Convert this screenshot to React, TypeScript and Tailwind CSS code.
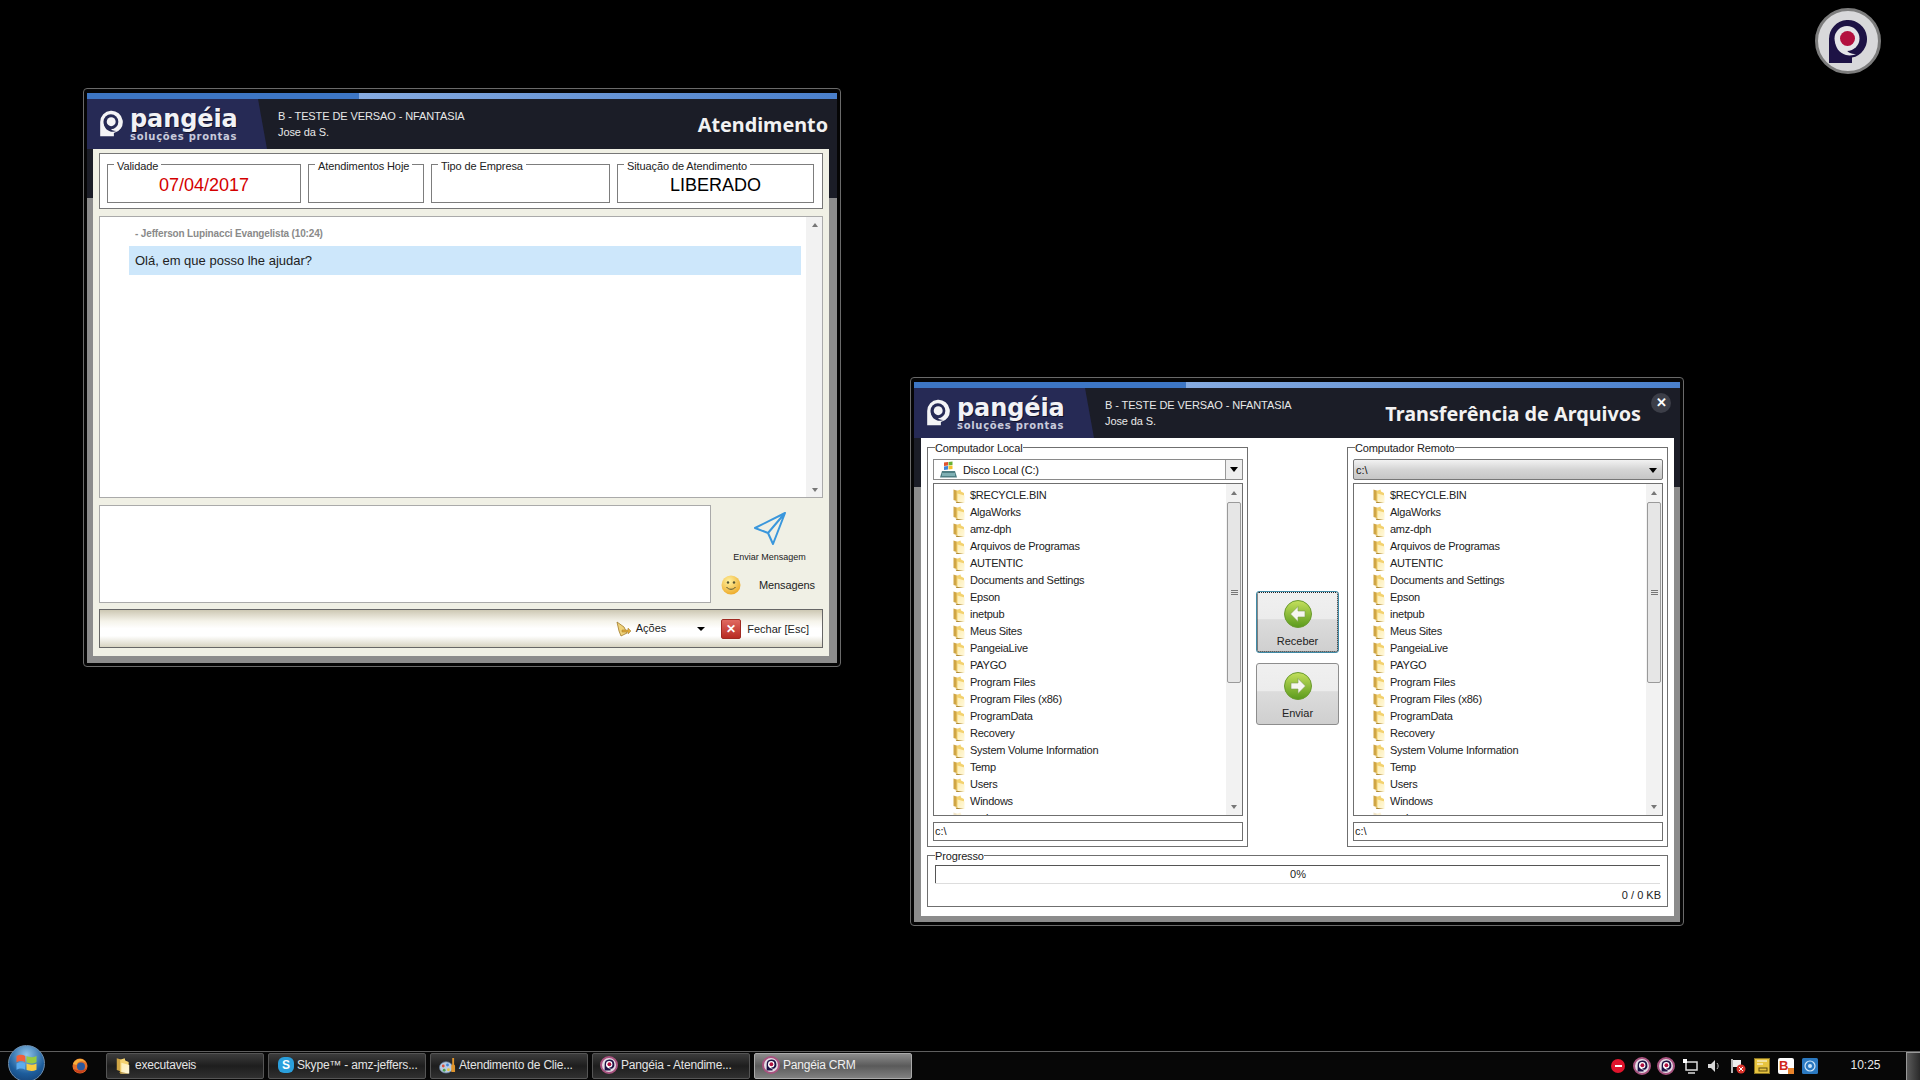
import type { ReactNode } from "react";

const folders = [
  "$RECYCLE.BIN", "AlgaWorks", "amz-dph", "Arquivos de Programas", "AUTENTIC", "Documents and Settings",
  "Epson", "inetpub", "Meus Sites", "PangeiaLive", "PAYGO", "Program Files", "Program Files (x86)",
  "ProgramData", "Recovery", "System Volume Information", "Temp", "Users", "Windows",
];

const taskButtons = [
  { label: "executaveis", icon: "folder", pad: "pl-[9px] gap-[5px]" },
  { label: "Skype™ - amz-jeffers...", icon: "skype", pad: "pl-[9px] gap-[3px]" },
  { label: "Atendimento de Clie...", icon: "app", pad: "pl-[8px] gap-[3px]" },
  { label: "Pangéia - Atendime...", icon: "pangeia", pad: "pl-[7px] gap-[3px]" },
  { label: "Pangéia CRM", icon: "pangeia", pad: "pl-[7px] gap-[3px]", active: true },
];

function PMark({ mark, ring, dot, className }: { mark: string; ring: string; dot: string; className: string }) {
  return (
    <svg viewBox="15 13 42 47" className={className}>
      <path d="M17 34a19 19 0 1 1 23 18.6V58H17Z" fill={mark} />
      <circle cx="35" cy="33.5" r="12.5" fill={ring} />
      <path d="M23 35c0 7 4 13 11 15 4 1 8 0 10-1-5 0-9-2-10-5Z" fill={ring} />
      <circle cx="35.5" cy="33.5" r="7.5" fill={dot} />
    </svg>
  );
}

function PangeiaLogo() {
  return (
    <div className="w-[180px] h-full shrink-0 bg-[#262a55] [clip-path:polygon(0_0,95%_0,100%_100%,0_100%)] flex pl-[12px] pt-[9px]">
      <PMark mark="#f4f4f6" ring="#262a55" dot="#f4f4f6" className="w-[25px] h-[29px] mr-[6px] mt-[1px]" />
      <div className="flex flex-col text-[#f2f2f6]">
        <span className="font-['DejaVu_Sans',sans-serif] font-bold text-[24px] leading-[22px] tracking-[-0.1px] [text-shadow:1px_1px_0_#10122a]">pangéia</span>
        <span className="font-['DejaVu_Sans',sans-serif] font-bold text-[10px] leading-[11px] mt-[1px] tracking-[0.7px] text-[#c9cbdc] whitespace-nowrap">soluções prontas</span>
      </div>
    </div>
  );
}

function Header({ title, close }: { title: string; close?: boolean }) {
  return (
    <div className="h-[50px] flex shrink-0">
      <PangeiaLogo />
      <div className="pl-[11px] pt-[9px] text-[#e8e8e8] text-[11px] leading-[16px] tracking-[-0.1px]">
        <div>B - TESTE DE VERSAO - NFANTASIA</div>
        <div>Jose da S.</div>
      </div>
      <div className={`ml-auto font-['Noto_Sans',sans-serif] font-bold text-[19.8px] text-[#f2f2f2] pt-[11px] ${close ? "mr-[39px]" : "mr-[9px]"}`}>
        {title}
      </div>
      {close && (
        <div className="absolute right-[9px] top-[11px] w-[20px] h-[20px] rounded-full bg-[#3c3e48] flex items-center justify-center text-white text-[13px] font-bold">
          ✕
        </div>
      )}
    </div>
  );
}

function Win({ x, y, w, h, title, close, children }: { x: string; y: string; w: string; h: string; title: string; close?: boolean; children: ReactNode }) {
  return (
    <div className={`absolute ${x} ${y} ${w} ${h} rounded-[4px] border border-[#6a6a6a] bg-[#050505] p-[3px] pt-[4px] flex`}>
      <div className="relative flex-1 flex flex-col min-w-0 bg-[linear-gradient(#1b1d27_0,#1b1d27_105px,#8c8c8c_105px)]">
        <div className="h-[6px] shrink-0 flex">
          <div className="w-[272px] bg-[#3d76c4]" />
          <div className="flex-1 bg-[linear-gradient(90deg,#86abe0,#4a80cc)]" />
        </div>
        <Header title={title} close={close} />
        {children}
      </div>
    </div>
  );
}

function FieldBox({ label, w, value, color }: { label: string; w: string; value?: string; color?: string }) {
  return (
    <fieldset className={`${w} h-[45px] border border-[#7d7d7d] shrink-0`}>
      <legend className="ml-[6px] px-[3px] text-[11px] leading-[12px] text-[#222] translate-y-[2px] tracking-[-0.1px]">{label}</legend>
      <div className={`text-center text-[18px] leading-[24px] pt-[3px] ${color}`}>{value}</div>
    </fieldset>
  );
}

function ArrowUp() {
  return <div className="w-0 h-0 border-x-[3.5px] border-x-transparent border-b-[4px] border-b-[#777]" />;
}
function ArrowDown() {
  return <div className="w-0 h-0 border-x-[3.5px] border-x-transparent border-t-[4px] border-t-[#777]" />;
}

function Folder({ faded, big }: { faded?: boolean; big?: boolean }) {
  return (
    <svg viewBox="0 0 12 15" className={`${big ? "w-[14px] h-[17px]" : "w-[12px] h-[16px]"} shrink-0 ${faded ? "opacity-30" : ""}`}>
      <defs>
        <linearGradient id="folderFront" x1="0" y1="0" x2="1" y2="1">
          <stop offset="0" stopColor="#fdeeb4" />
          <stop offset="1" stopColor="#fff8dc" />
        </linearGradient>
      </defs>
      <path d="M0.5 1 5 2.500V13L0.500 11.500Z" fill="#cfa545" />
      <path d="M3.500 2.500 7.500 1 8 3l3 1.500V14.500H3.500Z" fill="#f3d270" />
      <path d="M4.500 5 11.500 7v7.500H4.500Z" fill="url(#folderFront)" />
      <path d="M2.500 13 11 14.500H3.500Z" fill="#b08a34" />
    </svg>
  );
}

function Tree() {
  return (
    <div className="h-[333px] border border-[#6f6f6f] bg-white flex overflow-hidden shrink-0">
      <div className="flex-1 pl-[19px] pt-[3px] overflow-hidden">
        {folders.map((f) => (
          <div key={f} className="h-[17px] flex items-center gap-[5px] text-[11px] tracking-[-0.25px] text-[#222] whitespace-nowrap">
            <Folder />
            {f}
          </div>
        ))}
        <div className="h-[17px] flex items-center gap-[5px] text-[11px] text-[#222]">
          <Folder faded />
          wwl
        </div>
      </div>
      <div className="w-[16px] shrink-0 bg-[#f2f2f2] flex flex-col items-center pt-[7px] pb-[3px]">
        <ArrowUp />
        <div className="w-[14px] h-[181px] mt-[7px] rounded-[2px] border border-[#9a9a9a] bg-[#e6e6e6] flex flex-col items-center justify-center gap-[1px]">
          <div className="w-[7px] h-px bg-[#777]" />
          <div className="w-[7px] h-px bg-[#777]" />
          <div className="w-[7px] h-px bg-[#777]" />
        </div>
        <div className="mt-auto mb-[3px]">
          <ArrowDown />
        </div>
      </div>
    </div>
  );
}

function FilePane({ label, remote }: { label: string; remote?: boolean }) {
  return (
    <fieldset className="w-[321px] h-[407px] border border-[#6f6f6f] shrink-0 pl-[5px] pr-[4px]">
      <legend className="ml-[2px] text-[11px] leading-[14px] text-[#222] translate-y-[1px] tracking-[-0.15px]">{label}</legend>
      {remote ? (
        <div className="h-[21px] mt-[5px] mb-[3px] rounded-[2px] border border-[#777] bg-[linear-gradient(#f2f2f2,#d5d5d5_50%,#c6c6c6)] flex items-center pl-[2px] pt-px text-[11px] text-[#111]">
          c:\
          <div className="ml-auto mr-[5px] w-0 h-0 border-x-[4px] border-x-transparent border-t-[5px] border-t-black" />
        </div>
      ) : (
        <div className="h-[21px] mt-[5px] mb-[3px] border border-[#8a8a8a] bg-white flex items-center pl-[6px] text-[11px] tracking-[-0.15px] text-[#111]">
          <svg viewBox="0 0 17 17" className="w-[17px] h-[17px] mr-[6px]">
            <path d="M2 10h13l2 6.500H0Z" fill="#4f7f84" />
            <rect x="2" y="12" width="13" height="3" fill="#7fb0b4" />
            <path d="M4 1.500 8 1v3.500L4 5Z" fill="#e0522c" />
            <path d="M8.500 1l4-.5V4l-4 .5Z" fill="#68b034" />
            <path d="M4 5.500l4-.5v3.500L4 9Z" fill="#3f83d6" />
            <path d="M8.500 5l4-.5V8l-4 .5Z" fill="#f4c02c" />
          </svg>
          <span className="pt-px">Disco Local (C:)</span>
          <div className="ml-auto h-full w-[17px] border-l border-[#999] bg-[#eeeeee] flex items-center justify-center">
            <div className="w-0 h-0 border-x-[4px] border-x-transparent border-t-[5px] border-t-black" />
          </div>
        </div>
      )}
      <Tree />
      <div className="h-[19px] mt-[6px] border border-[#6f6f6f] bg-white pl-[1px] text-[11px] leading-[17px] text-[#222]">c:\</div>
    </fieldset>
  );
}

function GreenButton({ label, dir, focus }: { label: string; dir: "left" | "right"; focus?: boolean }) {
  return (
    <div className={`relative w-[83px] h-[62px] rounded-[3px] border flex flex-col items-center pt-[8px] text-[11px] text-[#222] bg-[linear-gradient(#f0f0f0,#ececec_45%,#dcdcdc_46%,#cfcfcf)] ${focus ? "border-[#3f8aa6] outline-dotted outline-1 -outline-offset-2 outline-[#222]" : "border-[#8d8d8d]"}`}>
      <svg viewBox="0 0 28 28" className="w-[28px] h-[28px]">
        <defs>
          <linearGradient id={`g${dir}`} x1="0" y1="0" x2="0" y2="1">
            <stop offset="0" stopColor="#c4e05c" />
            <stop offset="1" stopColor="#5a9a1c" />
          </linearGradient>
        </defs>
        <circle cx="14" cy="14" r="13.500" fill={`url(#g${dir})`} stroke="#6a9a30" />
        <path
          d={dir === "left" ? "M6.500 14 14 6.500V11h7v6h-7v4.500Z" : "M21.500 14 14 6.500V11H7v6h7v4.500Z"}
          fill="#f6f6f0"
          stroke="#7d9a50"
          strokeWidth="0.6"
        />
      </svg>
      <span className="mt-[5px]">{label}</span>
    </div>
  );
}

function TaskIcon({ icon }: { icon: string }) {
  if (icon === "folder") {
    return <Folder big />;
  }
  if (icon === "skype") {
    return (
      <div className="w-[16px] h-[16px] shrink-0 rounded-[6px] bg-[#2a9fdc] flex items-center justify-center text-white font-bold text-[12px] leading-none">S</div>
    );
  }
  if (icon === "app") {
    return (
      <svg viewBox="0 0 18 18" className="w-[17px] h-[17px] shrink-0">
        <ellipse cx="7.500" cy="11" rx="7" ry="6" fill="#b8cbe0" stroke="#5d7898" strokeWidth="0.8" />
        <circle cx="4.500" cy="9.500" r="1.500" fill="#d94f3a" />
        <circle cx="9" cy="8.500" r="1.500" fill="#3f83d6" />
        <circle cx="5.500" cy="14" r="1.500" fill="#4aa050" />
        <circle cx="10" cy="13.500" r="1.500" fill="#e8c23c" />
        <path d="M14 1h2v7l1 1v7h-4V9l1-1Z" fill="#e0952c" />
      </svg>
    );
  }
  return <PIcon />;
}

function PIcon() {
  return (
    <div className="w-[18px] h-[18px] shrink-0 rounded-full bg-[#e4dce4] border-[2px] border-[#a8527f] flex items-center justify-center">
      <PMark mark="#1d1245" ring="#ffffff" dot="#b01040" className="w-[11px] h-[12px]" />
    </div>
  );
}

function Tray({ children }: { children: ReactNode }) {
  return <div className="w-[24px] h-full flex items-center justify-center shrink-0">{children}</div>;
}

export default function App() {
  return (
    <div className="relative w-[1920px] h-[1080px] overflow-hidden bg-black flex flex-col justify-end font-['Liberation_Sans',sans-serif]">
      {/* desktop badge */}
      <div className="absolute left-[1815px] top-[8px] w-[66px] h-[66px] rounded-full bg-[#d8d8da] border-[3px] border-[#7c7c7c] flex items-center justify-center">
        <PMark mark="#1d1245" ring="#e4e4e8" dot="#b3103f" className="w-[42px] h-[47px]" />
      </div>

      <Win x="left-[83px]" y="top-[88px]" w="w-[758px]" h="h-[579px]" title="Atendimento">
        <div className="flex-1 ml-[6px] mr-[8px] mb-[7px] bg-[#f0f0e5] px-[6px] pt-[4px] flex flex-col">
          <div className="h-[56px] border border-[#777] bg-white flex gap-[7px] pl-[7px] pt-[4px] shrink-0">
            <FieldBox label="Validade" w="w-[194px]" value="07/04/2017" color="text-[#d40000]" />
            <FieldBox label="Atendimentos Hoje" w="w-[116px]" />
            <FieldBox label="Tipo de Empresa" w="w-[179px]" />
            <FieldBox label="Situação de Atendimento" w="w-[197px]" value="LIBERADO" color="text-black" />
          </div>
          <div className="h-[282px] mt-[7px] border border-[#aaaaaa] bg-white flex shrink-0">
            <div className="flex-1 pl-[29px] pr-[5px] pt-[10px]">
              <div className="pl-[6px] text-[10px] font-bold leading-[13px] tracking-[-0.15px] text-[#8a8a8a]">- Jefferson Lupinacci Evangelista (10:24)</div>
              <div className="mt-[6px] h-[29px] bg-[#cde7fb] pl-[6px] text-[13px] leading-[29px] text-[#222]">Olá, em que posso lhe ajudar?</div>
            </div>
            <div className="w-[16px] bg-[#f2f2f2] flex flex-col items-center justify-between pl-[2px] pt-[6px] pb-[5px]">
              <ArrowUp />
              <ArrowDown />
            </div>
          </div>
          <div className="h-[98px] mt-[7px] flex shrink-0">
            <div className="w-[612px] border border-[#aaaaaa] bg-white" />
            <div className="flex-1 flex flex-col">
              <div className="flex flex-col items-center pl-[5px] pt-[6px]">
                <svg viewBox="0 0 36 35" className="w-[36px] h-[35px]">
                  <path d="M33 2 3 17l13 5 5 11Zm0 0L16 22" fill="none" stroke="#3a97dc" strokeWidth="2" strokeLinejoin="round" />
                </svg>
                <span className="mt-[5px] text-[9px] leading-[12px] text-[#222]">Enviar Mensagem</span>
              </div>
              <div className="flex items-center gap-[18px] pl-[10px] mt-[12px]">
                <svg viewBox="0 0 20 20" className="w-[20px] h-[20px]">
                  <defs>
                    <radialGradient id="smile" cx="0.4" cy="0.3" r="0.8">
                      <stop offset="0" stopColor="#fff2a0" />
                      <stop offset="1" stopColor="#eba21c" />
                    </radialGradient>
                  </defs>
                  <circle cx="10" cy="10" r="9.500" fill="url(#smile)" />
                  <circle cx="7" cy="7.500" r="1.200" fill="#553" />
                  <circle cx="13" cy="7.500" r="1.200" fill="#553" />
                  <path d="M5.500 12c2 3 7 3 9 0" fill="none" stroke="#553" strokeWidth="1" />
                </svg>
                <span className="text-[11px] tracking-[-0.1px] text-[#222]">Mensagens</span>
              </div>
            </div>
          </div>
          <div className="h-[39px] mt-[6px] border border-[#666] bg-[linear-gradient(#cdc8b4,#f5f3ea_30%,#ffffff_50%,#ffffff_70%,#d8d4c2)] flex items-center justify-end pr-[13px] text-[11px] text-[#222] shrink-0">
            <svg viewBox="0 0 16 16" className="w-[16px] h-[16px] mr-[4px]">
              <path d="M1 1l7 5 3 6-6 3-2-5Z" fill="#efd27a" stroke="#a07a2a" strokeWidth="0.8" />
              <path d="M6 9h6v-2l3 3-3 3v-2H6Z" fill="#e0a93a" stroke="#a07a2a" strokeWidth="0.5" />
            </svg>
            <span>Ações</span>
            <div className="ml-[31px] mr-[16px] w-0 h-0 border-x-[4px] border-x-transparent border-t-[4px] border-t-black" />
            <div className="w-[20px] h-[20px] rounded-[2px] bg-[linear-gradient(#e06a60,#b82a22)] border border-[#a02a22] flex items-center justify-center text-white text-[12px] font-bold mr-[6px]">✕</div>
            <span className="pt-px">Fechar [Esc]</span>
          </div>
        </div>
      </Win>

      <Win x="left-[910px]" y="top-[377px]" w="w-[774px]" h="h-[549px]" title="Transferência de Arquivos" close>
        <div className="flex-1 ml-[7px] mr-[6px] mb-[6px] bg-white px-[6px] pt-[2px] flex flex-col">
          <div className="flex justify-between">
            <FilePane label="Computador Local" />
            <div className="flex flex-col items-center gap-[10px] pt-[151px]">
              <GreenButton label="Receber" dir="left" focus />
              <GreenButton label="Enviar" dir="right" />
            </div>
            <FilePane label="Computador Remoto" remote />
          </div>
          <fieldset className="h-[59px] mt-[1px] border border-[#6f6f6f] px-[7px] shrink-0">
            <legend className="ml-[0px] text-[11px] leading-[14px] text-[#222] translate-y-[1px] tracking-[-0.15px]">Progresso</legend>
            <div className="h-[18px] mt-[3px] border-t border-l border-[#555] border-r-[#ddd] bg-white text-center text-[11px] leading-[17px] text-[#222] shadow-[0_1px_0_#ddd]">0%</div>
            <div className="text-right text-[11px] leading-[13px] mt-[6px] -mr-[1px] text-[#222]">0 / 0 KB</div>
          </fieldset>
        </div>
      </Win>

      {/* taskbar */}
      <div className="relative h-[29px] border-t border-[#5f5f5f] bg-[#070707] flex items-center shrink-0">
        <div className="ml-[8px] w-[37px] h-[37px] -mt-[6px] rounded-full bg-[radial-gradient(circle_at_50%_25%,#8fc4ea,#1d5d9c_60%,#123a6c)] border border-[#6f8fae] flex items-center justify-center shrink-0">
          <svg viewBox="0 0 20 20" className="w-[25px] h-[25px]">
            <path d="M2 4c3-1.500 5-1 7 0v5C7 8 5 7.500 2 9Z" fill="#f0603a" />
            <path d="M10 4c2 1 5 1.500 8 0v5c-3 1.500-6 1-8 0Z" fill="#98cc40" />
            <path d="M2 10c3-1.500 5-1 7 0v5c-2-1-4-1.500-7 0Z" fill="#5cacee" />
            <path d="M10 10c2 1 5 1.500 8 0v5c-3 1.500-6 1-8 0Z" fill="#f9cc40" />
          </svg>
        </div>
        <svg viewBox="0 0 16 16" className="ml-[27px] mr-[18px] w-[16px] h-[16px] shrink-0">
          <circle cx="8" cy="8" r="7.500" fill="#e4702a" />
          <circle cx="9" cy="8.500" r="4" fill="#2c5aa0" />
          <path d="M1 6c1-3 4-5 7-5 3 0 5 2 6 4-2-2-4-2-6-1.500C6 4 5 5 4.500 7Z" fill="#f6b23c" />
          <path d="M1.500 11c2 4 7 5 10 3 2-1 3-3 3.500-5-2 3-5 4-8 3.500-2-.5-4-1-5.500-1.500Z" fill="#c8401c" />
        </svg>
        <div className="flex gap-[4px] h-full py-[1px]">
          {taskButtons.map((b) => (
            <div
              key={b.label}
              className={`w-[158px] rounded-[2px] border flex items-center pb-[2px] text-[12px] tracking-[-0.2px] whitespace-nowrap overflow-hidden ${b.pad} ${b.active ? "border-[#aaaaaa] bg-[linear-gradient(#8c8c8c,#5a5a5a_50%,#808080)] text-[#f0f0f0]" : "border-[#555] bg-[linear-gradient(#3c3c3c,#1e1e1e_50%,#303030)] text-[#e4e4e4]"}`}
            >
              <TaskIcon icon={b.icon} />
              {b.label}
            </div>
          ))}
        </div>
        <div className="ml-auto flex items-center h-full">
          <Tray><div className="w-[14px] h-[14px] rounded-full bg-[#e0142c] flex items-center justify-center"><div className="w-[7px] h-[2px] bg-white" /></div></Tray>
          <Tray><PIcon /></Tray>
          <Tray><PIcon /></Tray>
          <Tray>
            <svg viewBox="0 0 16 16" className="w-[16px] h-[16px]">
              <rect x="4" y="4" width="11" height="8" fill="none" stroke="#ddd" strokeWidth="1.500" />
              <rect x="1" y="1" width="4" height="4" fill="#fff" />
              <path d="M6 15h7" stroke="#ddd" strokeWidth="1.500" />
            </svg>
          </Tray>
          <Tray>
            <svg viewBox="0 0 16 16" className="w-[16px] h-[16px]">
              <path d="M2 6h3l4-4v12l-4-4H2Z" fill="#d8d8d8" />
              <path d="M11 5c1.500 2 1.500 4 0 6" fill="none" stroke="#bbb" />
            </svg>
          </Tray>
          <Tray>
            <svg viewBox="0 0 16 16" className="w-[16px] h-[16px]">
              <path d="M2 1v14" stroke="#eee" strokeWidth="1.500" />
              <path d="M3 2h8v7H3Z" fill="#eee" />
              <circle cx="11" cy="11" r="4.500" fill="#d9342c" />
              <path d="M9 9l4 4m0-4-4 4" stroke="#fff" />
            </svg>
          </Tray>
          <Tray>
            <svg viewBox="0 0 16 16" className="w-[16px] h-[16px]">
              <rect x="0.500" y="0.500" width="15" height="15" fill="#e8c440" stroke="#8a7420" />
              <path d="M3 3h10M3 6h6" stroke="#fff" />
              <rect x="5" y="10" width="8" height="3" fill="none" stroke="#5a4a10" />
            </svg>
          </Tray>
          <Tray>
            <div className="relative w-[16px] h-[16px] rounded-[2px] bg-white text-[#d0281c] text-[13px] leading-[15px] font-bold pl-[1px]">
              B
              <div className="absolute right-0 bottom-0 w-[6px] h-[6px] bg-[#e8842c]" />
            </div>
          </Tray>
          <Tray>
            <svg viewBox="0 0 16 16" className="w-[16px] h-[16px]">
              <rect width="16" height="16" rx="1.500" fill="#2a78c0" />
              <circle cx="8" cy="8" r="5" fill="none" stroke="#cfe6f8" strokeWidth="1.200" />
              <circle cx="8" cy="8" r="2" fill="#cfe6f8" />
            </svg>
          </Tray>
          <div className="w-[84px] pl-[3px] pb-[2px] text-center text-[12px] text-[#e8e8e8] shrink-0">10:25</div>
          <div className="w-[14px] h-full border-l border-t border-[#999] bg-[linear-gradient(90deg,#5a5a5a,#2a2a2a)] shrink-0" />
        </div>
      </div>
    </div>
  );
}
